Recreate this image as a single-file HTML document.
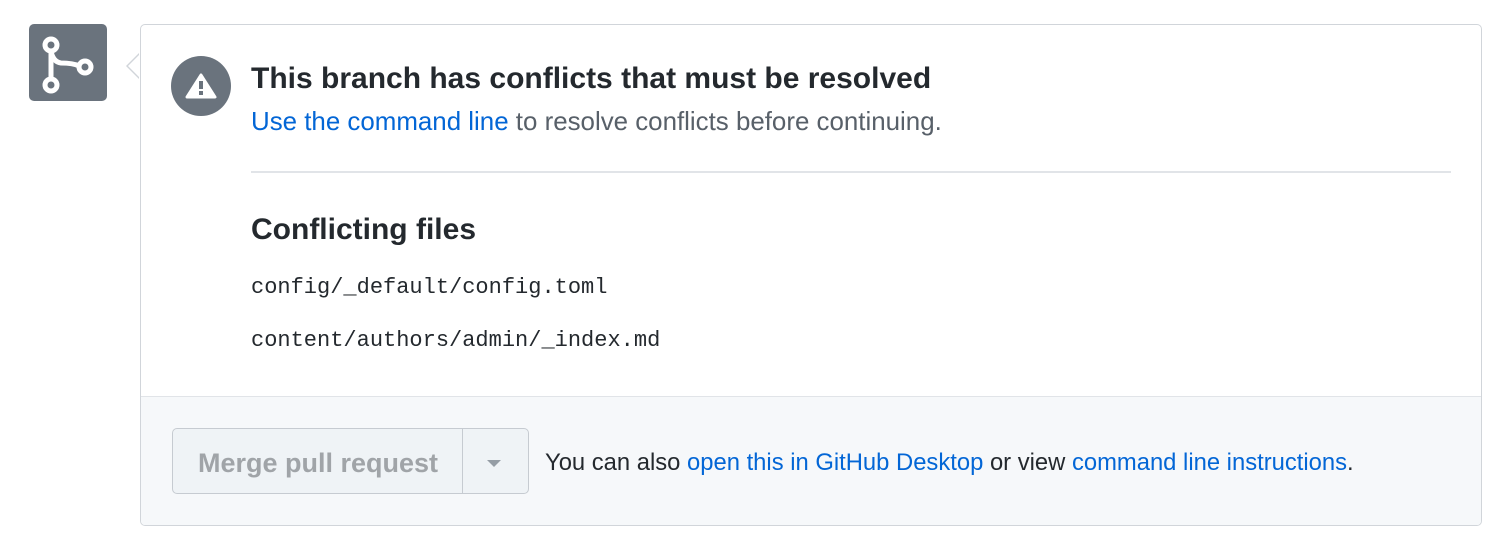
<!DOCTYPE html>
<html><head><style>
body{margin:0;width:1500px;height:548px;background:#fff;font-family:"Liberation Sans",sans-serif;position:relative;overflow:hidden}
.ib{position:absolute;left:29px;top:24px;width:78px;height:77px;background:#6a737d;border-radius:5px}
.card{position:absolute;left:140px;top:24px;width:1340px;height:500px;border:1px solid #d1d5da;border-radius:5px;background:#fff;overflow:hidden}
.arr{position:absolute;left:126px;top:53px;width:0;height:0;border:13px solid transparent;border-right-color:#d1d5da;border-left:0}
.arr2{position:absolute;left:128px;top:54px;width:0;height:0;border:12px solid transparent;border-right-color:#fff;border-left:0}
.wc{position:absolute;left:171px;top:56px;width:60px;height:60px;border-radius:50%;background:#6a737d}
.t{position:absolute;left:251px;top:62px;font-size:30px;font-weight:bold;color:#24292e;white-space:nowrap}
.s{position:absolute;left:251px;top:108px;font-size:25.9px;color:#586069;white-space:nowrap}
a{color:#0366d6;text-decoration:none}
.hr{position:absolute;left:251px;top:171px;width:1200px;height:2px;background:#e1e4e8}
.h{position:absolute;left:251px;top:213px;font-size:30px;font-weight:bold;color:#24292e}
.m{position:absolute;left:251px;font-family:"Liberation Mono",monospace;font-size:22px;color:#24292e}
.foot{position:absolute;left:0;top:371px;width:1340px;height:129px;background:#f6f8fa;border-top:1px solid #e1e4e8}
.btn{position:absolute;left:172px;top:428px;width:355px;height:64px;border:1px solid #c6cbd1;border-radius:5px;background:#eff3f6}
.bt{position:absolute;left:198px;top:448px;font-size:27px;color:#a0a4a8;font-weight:bold;white-space:nowrap}
.sp{position:absolute;left:462px;top:429px;width:1px;height:64px;background:#c6cbd1}
.car{position:absolute;left:487px;top:460px;border:7px solid transparent;border-top:7px solid #959da5;border-bottom:0}
.ft{position:absolute;left:545px;top:449px;font-size:23.8px;color:#24292e;white-space:nowrap}
</style></head><body>
<div class="ib"><svg width="78" height="77" viewBox="0 0 78 77"><g fill="none" stroke="#fff" stroke-width="5"><circle cx="22" cy="21" r="6"/><circle cx="22" cy="61" r="6"/><circle cx="56" cy="43" r="6"/><path d="M22 27V55M22 27Q24 38 32 39Q44 39 50 42"/></g></svg></div>
<div class="card"><div class="foot"></div></div>
<div class="arr"></div><div class="arr2"></div>
<div class="wc"><svg width="60" height="60" viewBox="0 0 60 60"><path d="M30 19L44 41H16Z" fill="#fff" stroke="#fff" stroke-width="3" stroke-linejoin="round"/><rect x="28" y="25" width="4" height="8" fill="#6a737d"/><rect x="28" y="35" width="4" height="4" fill="#6a737d"/></svg></div>
<div class="t">This branch has conflicts that must be resolved</div>
<div class="s"><a>Use the command line</a> to resolve conflicts before continuing.</div>
<div class="hr"></div>
<div class="h">Conflicting files</div>
<div class="m" style="top:275px">config/_default/config.toml</div>
<div class="m" style="top:328px">content/authors/admin/_index.md</div>
<div class="btn"></div><div class="sp"></div><div class="car"></div>
<div class="bt">Merge pull request</div>
<div class="ft">You can also <a>open this in GitHub Desktop</a> or view <a>command line instructions</a>.</div>
</body></html>
